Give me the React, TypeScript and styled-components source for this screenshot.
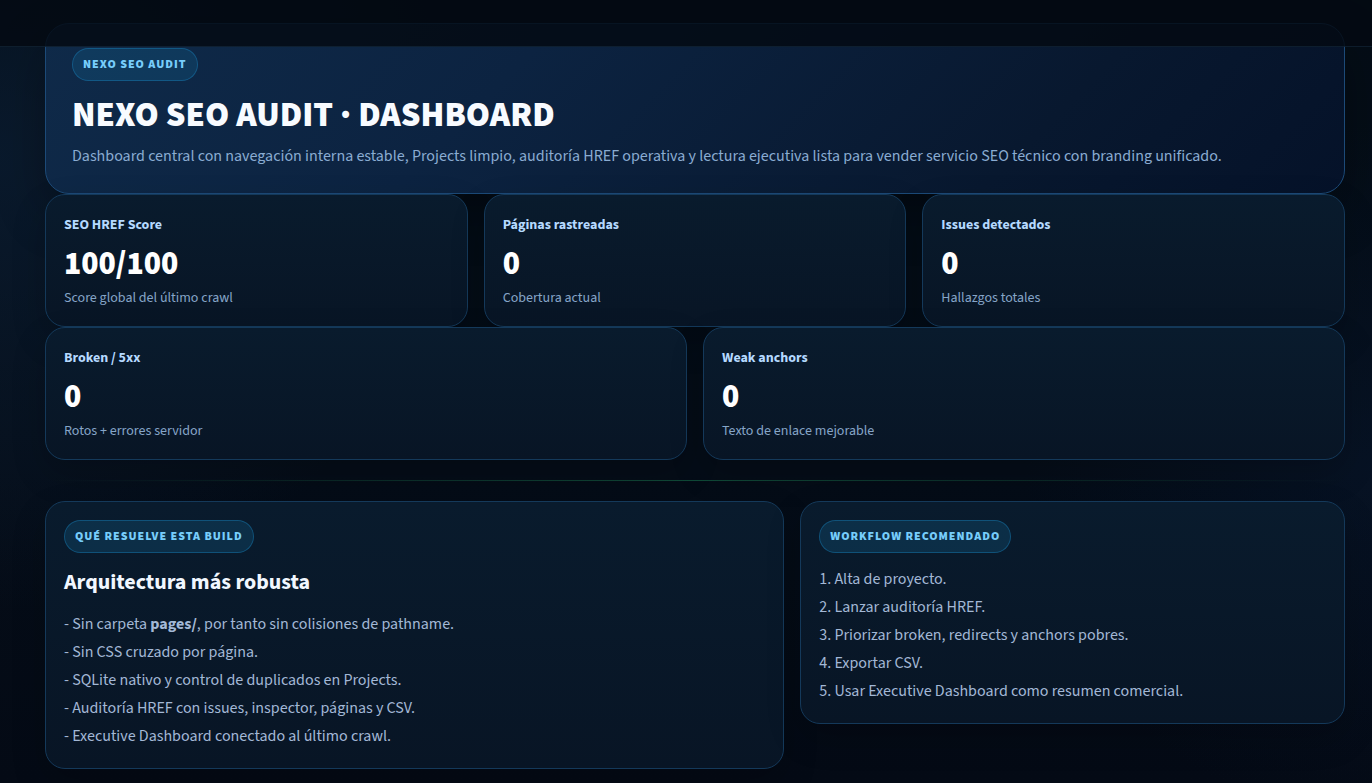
import React from "react";
import styled, { createGlobalStyle } from "styled-components";

const GlobalStyle = createGlobalStyle`
  * { box-sizing: border-box; }
  body {
    margin: 0;
    min-height: 100vh;
    color: #a3b8d6;
    font-family: "Source Sans Pro", "Source Sans 3", "Noto Sans CJK SC", sans-serif;
    font-size: 16px;
    line-height: 28px;
    background:
      radial-gradient(circle at 0% 20%, rgba(14, 36, 62, 0.55), transparent 30%),
      radial-gradient(circle at 100% 60%, rgba(10, 30, 62, 0.3), transparent 24%),
      linear-gradient(180deg, #040d16 0%, #050d18 60%, #040a15 100%);
  }
  h1, h2, p, ul, ol { margin: 0; padding: 0; }
`;

const TopBar = styled.header`
  position: fixed;
  inset: 0 0 auto;
  z-index: 2;
  height: 47px;
  background: rgba(3, 10, 18, 0.84);
  border-bottom: 1px solid rgba(80, 150, 200, 0.14);
`;

const Page = styled.main`
  padding: 23px 27px 14px 45px;
`;

const Hero = styled.section`
  padding: 24px 26px;
  border: 1px solid #1c4a78;
  border-radius: 24px;
  background: linear-gradient(135deg, #0f2a49 0%, #0c2341 35%, #08182f 75%, #051229 100%);
  box-shadow: 0 20px 50px rgba(0, 0, 0, 0.25);
`;

const Pill = styled.span`
  display: inline-block;
  padding: 0 10px;
  border: 1px solid rgba(24, 130, 190, 0.42);
  border-radius: 17px;
  background: rgba(24, 120, 170, 0.22);
  color: #77cdfb;
  font-size: 12px;
  font-weight: 900;
  line-height: 31px;
  letter-spacing: 1px;
  vertical-align: top;
`;

const Title = styled.h1`
  margin-top: 10px;
  color: #f8fbff;
  font-size: 35px;
  font-weight: 900;
  line-height: 48px;
`;

const Lead = styled.p`
  margin-top: 2px;
  color: #8aacd2;
  line-height: 30px;
  margin-bottom: -2px;
`;

const Grid = styled.div<{ $columns: string }>`
  display: grid;
  grid-template-columns: ${({ $columns }) => $columns};
  align-items: start;
  gap: 16px;
`;

const Card = styled.article`
  padding: 18px;
  border: 1px solid #14395a;
  border-radius: 20px;
  background: linear-gradient(180deg, #091b2d 0%, #081525 100%);
  box-shadow: 0 14px 34px rgba(0, 0, 0, 0.18);
`;

const MetricLabel = styled.h2`
  color: #b5d9ff;
  font-size: 14px;
  font-weight: 700;
  line-height: 24px;
`;

const MetricValue = styled.p`
  color: #fff;
  font-size: 32px;
  font-weight: 900;
  line-height: 50px;
  margin-top: 2px;
`;

const MetricNote = styled.p`
  color: #86a5c8;
  font-size: 14px;
  line-height: 19px;
`;

const Divider = styled.hr`
  height: 1px;
  margin: 20px 0;
  border: 0;
  background: linear-gradient(90deg, transparent, #104a38, transparent);
`;

const SectionTitle = styled.h2`
  margin-top: 14px;
  color: #f1f7ff;
  font-size: 22px;
  font-weight: 700;
  line-height: 30px;
`;

const List = styled.ul<{ $gap: number }>`
  margin-top: ${({ $gap }) => $gap}px;
  list-style: none;
`;

type MetricData = { label: string; value: string; note: string };

const crawlMetrics: MetricData[] = [
  { label: "SEO HREF Score", value: "100/100", note: "Score global del último crawl" },
  { label: "Páginas rastreadas", value: "0", note: "Cobertura actual" },
  { label: "Issues detectados", value: "0", note: "Hallazgos totales" },
];

const linkMetrics: MetricData[] = [
  { label: "Broken / 5xx", value: "0", note: "Rotos + errores servidor" },
  { label: "Weak anchors", value: "0", note: "Texto de enlace mejorable" },
];

const steps = [
  "Alta de proyecto.",
  "Lanzar auditoría HREF.",
  "Priorizar broken, redirects y anchors pobres.",
  "Exportar CSV.",
  "Usar Executive Dashboard como resumen comercial.",
];

function Metric({ label, value, note }: MetricData) {
  return (
    <Card>
      <MetricLabel>{label}</MetricLabel>
      <MetricValue>{value}</MetricValue>
      <MetricNote>{note}</MetricNote>
    </Card>
  );
}

export default function App() {
  return (
    <>
      <GlobalStyle />
      <TopBar />
      <Page>
        <Hero>
          <Pill>NEXO SEO AUDIT</Pill>
          <Title>NEXO SEO AUDIT · DASHBOARD</Title>
          <Lead>
            Dashboard central con navegación interna estable, Projects limpio, auditoría HREF operativa y lectura
            ejecutiva lista para vender servicio SEO técnico con branding unificado.
          </Lead>
        </Hero>
        <Grid $columns="repeat(3, 1fr)">
          {crawlMetrics.map((m) => <Metric key={m.label} {...m} />)}
        </Grid>
        <Grid $columns="repeat(2, 1fr)">
          {linkMetrics.map((m) => <Metric key={m.label} {...m} />)}
        </Grid>
        <Divider />
        <Grid $columns="19fr 14fr">
          <Card>
            <Pill>QUÉ RESUELVE ESTA BUILD</Pill>
            <SectionTitle>Arquitectura más robusta</SectionTitle>
            <List $gap={13}>
              <li>- Sin carpeta <b>pages/</b>, por tanto sin colisiones de pathname.</li>
              <li>- Sin CSS cruzado por página.</li>
              <li>- SQLite nativo y control de duplicados en Projects.</li>
              <li>- Auditoría HREF con issues, inspector, páginas y CSV.</li>
              <li>- Executive Dashboard conectado al último crawl.</li>
            </List>
          </Card>
          <Card>
            <Pill>WORKFLOW RECOMENDADO</Pill>
            <List as="ol" $gap={12}>
              {steps.map((step, i) => <li key={step}>{i + 1}. {step}</li>)}
            </List>
          </Card>
        </Grid>
      </Page>
    </>
  );
}
